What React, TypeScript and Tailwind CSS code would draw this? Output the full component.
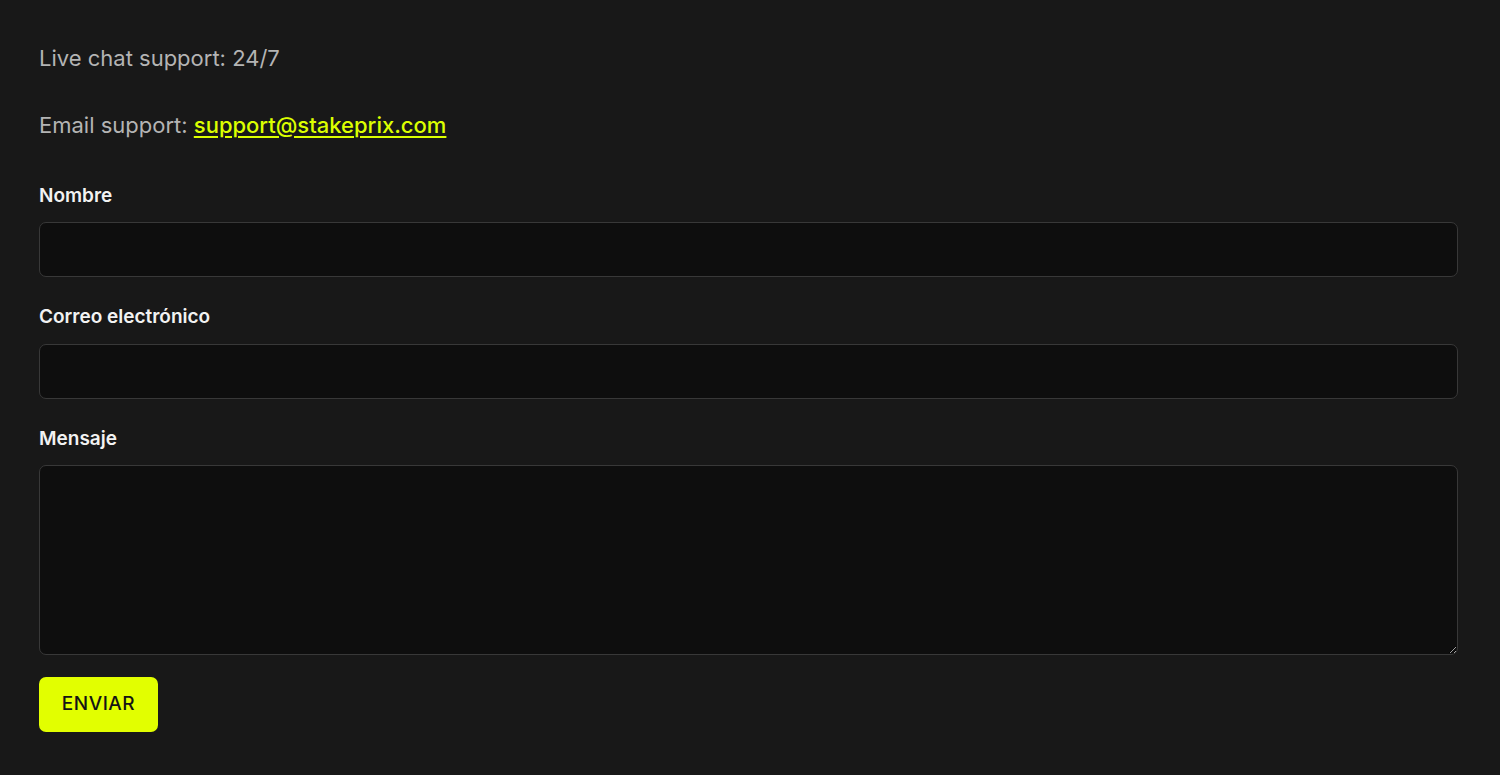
export default function App() {
  return (
    <div className="min-h-screen bg-[#181818] pl-[39px] pr-[42px] pt-[44px] font-['Inter',sans-serif]">
      <p className="text-[22px] leading-[28px] text-[#b4b4b4]">Live chat support: 24/7</p>
      <p className="mt-[39px] text-[22px] leading-[28px] text-[#b4b4b4]">
        Email support:{" "}
        <a href="#" className="font-medium text-[#dcff00] underline underline-offset-[3px] decoration-[1.5px]">
          support@stakeprix.com
        </a>
      </p>
      <form className="mt-[43px] flex flex-col">
        <label className="text-[19px] leading-[28px] font-semibold text-[#f2f2f2]">Nombre</label>
        <input className="mt-[12px] h-[55px] w-full rounded-[7px] border border-[#383838] bg-[#0e0e0e] px-4 text-white outline-none" />
        <label className="mt-[26px] text-[19px] leading-[28px] font-semibold text-[#f2f2f2]">Correo electrónico</label>
        <input className="mt-[13px] h-[55px] w-full rounded-[7px] border border-[#383838] bg-[#0e0e0e] px-4 text-white outline-none" />
        <label className="mt-[26px] text-[19px] leading-[28px] font-semibold text-[#f2f2f2]">Mensaje</label>
        <textarea className="mt-[12px] h-[190px] w-full rounded-[7px] border border-[#383838] bg-[#0e0e0e] px-4 py-3 text-white outline-none" />
        <div className="mt-[22px]">
          <button type="button" className="h-[55px] w-[119px] rounded-[7px] bg-[#e2ff00] text-[19px] font-medium tracking-[0.5px] text-[#141414]">
            ENVIAR
          </button>
        </div>
      </form>
    </div>
  );
}
